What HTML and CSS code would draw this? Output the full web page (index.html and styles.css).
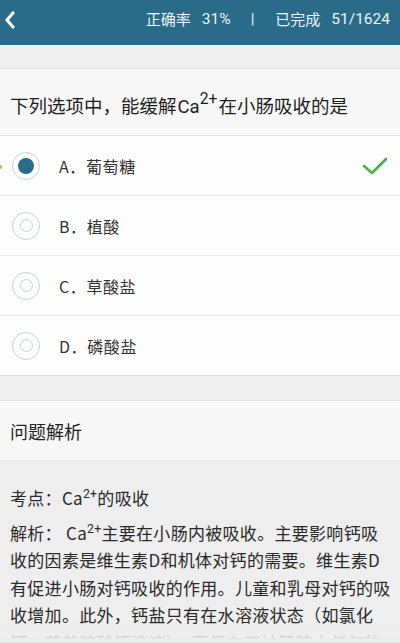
FILE: index.html
```html
<!DOCTYPE html>
<html lang="zh-CN">
<head>
    <meta charset="UTF-8">
    <meta name="viewport" content="width=device-width, initial-scale=1.0">
    <title>问题解析</title>
    <link rel="stylesheet" href="styles.css">
</head>
<body>

<header class="topbar">
    <svg class="back" width="12" height="18" viewBox="0 0 12 18">
        <polyline points="9,2 3,9 9,16" fill="none" stroke="#fff" stroke-width="3.2" stroke-linejoin="round" stroke-linecap="round"/>
    </svg>
    <div class="stats">
        <span>正确率</span><span class="num">31%</span>
        <span class="divider">|</span>
        <span>已完成</span><span class="num">51/1624</span>
    </div>
</header>

<div class="band"></div>

<div class="question">下列选项中，能缓解<span class="chem">Ca<sup>2+</sup></span>在小肠吸收的是</div>

<ul class="options">
    <li class="option selected">
        <span class="radio"><span class="dot"></span></span>
        <span class="label">A．葡萄糖</span>
        <svg class="check" width="28" height="22" viewBox="0 0 28 22">
            <polyline points="3,11 11,18 25,4" fill="none" stroke="#4cae4c" stroke-width="2.6" stroke-linecap="round" stroke-linejoin="round"/>
        </svg>
        <span class="marker"></span>
    </li>
    <li class="option">
        <span class="radio"><span class="dot"></span></span>
        <span class="label">B．植酸</span>
    </li>
    <li class="option">
        <span class="radio"><span class="dot"></span></span>
        <span class="label">C．草酸盐</span>
    </li>
    <li class="option">
        <span class="radio"><span class="dot"></span></span>
        <span class="label">D．磷酸盐</span>
    </li>
</ul>

<div class="gap"></div>

<div class="section-title">问题解析</div>

<div class="analysis">
    <p class="point">考点：Ca<sup>2+</sup>的吸收</p>
    <p>解析： Ca<sup>2+</sup>主要在小肠内被吸收。主要影响钙吸收的因素是维生素D和机体对钙的需要。维生素D有促进小肠对钙吸收的作用。儿童和乳母对钙的吸收增加。此外，钙盐只有在水溶液状态（如氯化钙、葡萄糖酸钙溶液），而且在不被肠腔中任何物质沉淀的情况下，才能被吸收。</p>
</div>

<div class="fade"></div>

</body>
</html>
```

FILE: styles.css
```css
body {
    margin: 0;
    padding: 0;
    height: 643px;
    overflow: hidden;
    background-color: #eeeeee;
    font-family: 'Noto Sans CJK SC', 'Noto Sans', sans-serif;
    color: #222;
}

.topbar {
    height: 46px;
    background-color: #2a6b8a;
    display: flex;
    align-items: center;
    justify-content: space-between;
    padding: 0 10px 0 4px;
    box-sizing: border-box;
    border-bottom: 1px solid #f6f6f6;
}

.back {
    display: block;
    margin-top: -6px;
}

.stats {
    display: flex;
    align-items: center;
    color: #eef3f6;
    font-size: 15px;
    margin-top: -8px;
}

.stats .num {
    margin-left: 11px;
    font-family: 'Roboto', 'Noto Sans', sans-serif;
    font-size: 15.5px;
}

.stats .divider {
    margin: 0 21px 0 20px;
    font-family: 'Roboto', sans-serif;
}

.band {
    height: 22px;
    background-color: #efefef;
    border-bottom: 1px solid #e2e2e2;
}

.question {
    height: 67px;
    box-sizing: border-box;
    padding: 23px 10px 0;
    background-color: #f7f7f7;
    font-size: 18.5px;
    line-height: 26px;
    color: #1e1e1e;
    border-bottom: 1px solid #e4e4e4;
}

.question .chem {
    font-family: 'Roboto', sans-serif;
    margin: 0 1px;
}

sup {
    font-size: 0.72em;
    line-height: 0;
    vertical-align: 0.55em;
    font-family: 'Roboto', sans-serif;
}

.question sup {
    font-size: 0.85em;
}

.options {
    list-style: none;
    margin: 0;
    padding: 0;
    background-color: #fdfdfd;
}

.option {
    position: relative;
    height: 60px;
    box-sizing: border-box;
    display: flex;
    align-items: center;
    padding-left: 12px;
    border-bottom: 1px solid #ebebeb;
}

.option:last-child {
    border-bottom: 1px solid #e0e0e0;
}

.radio {
    width: 26px;
    height: 26px;
    border: 1px solid #cdd3d6;
    border-radius: 50%;
    display: flex;
    align-items: center;
    justify-content: center;
    flex-shrink: 0;
}

.radio .dot {
    width: 11px;
    height: 11px;
    border: 1px solid #cdd3d6;
    border-radius: 50%;
}

.option.selected .dot {
    width: 16px;
    height: 16px;
    border: none;
    background-color: #2a6b8a;
}

.label {
    margin-left: 19px;
    font-size: 16px;
    color: #333;
    letter-spacing: 0.6px;
}

.check {
    margin-left: auto;
    margin-right: 11px;
}

.marker {
    position: absolute;
    left: -2px;
    top: 29px;
    width: 4px;
    height: 4px;
    border-radius: 50%;
    background-color: #e8a13c;
}

.gap {
    height: 24px;
    background-color: #efefef;
    border-bottom: 1px solid #e4e4e4;
}

.section-title {
    height: 59px;
    box-sizing: border-box;
    padding: 17px 10px 0;
    background-color: #f7f7f7;
    font-size: 18px;
    line-height: 26px;
    color: #222;
}

.analysis {
    padding: 24px 8px 0 10px;
    background-color: #eeeeee;
}

.analysis p {
    margin: 0;
    font-size: 17px;
    line-height: 27.5px;
    letter-spacing: 0.3px;
    color: #2a2a2a;
}

.analysis .point {
    margin-bottom: 7px;
}

/* fading edge at the bottom of the scroll view */
.fade {
    position: fixed;
    left: 0;
    right: 0;
    bottom: 0;
    height: 16px;
    background: linear-gradient(rgba(238, 238, 238, 0.3), #eeeeee 85%);
    border-bottom: 1px solid #e2e2e2;
}
```
